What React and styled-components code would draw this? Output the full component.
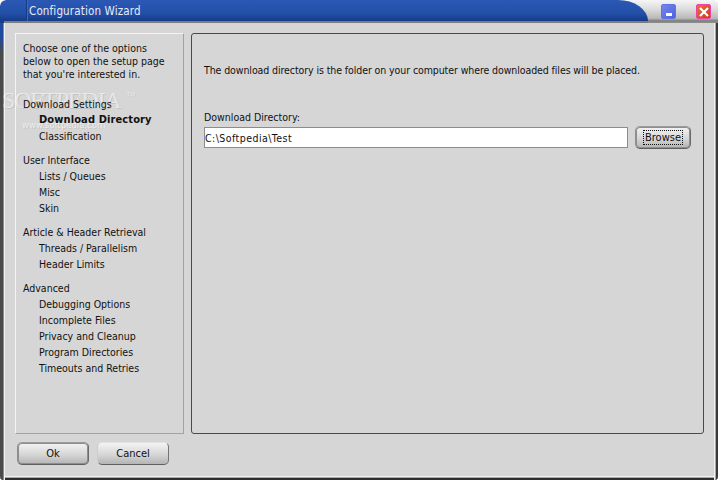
import React from "react";
import styled, { createGlobalStyle } from "styled-components";

const GlobalStyle = createGlobalStyle`
  html, body {
    margin: 0;
    padding: 0;
    background: #fff;
  }
  body {
    font-family: "DejaVu Sans", "Liberation Sans", sans-serif;
    font-stretch: condensed;
    font-size: 10.5px;
    color: #111;
  }
`;

const Window = styled.div`
  position: relative;
  width: 718px;
  height: 480px;
  display: flex;
  flex-direction: column;
  background: #d6d6d6;
  border-radius: 6px 6px 4px 4px;
  overflow: hidden;
`;

const TitleBar = styled.div`
  flex: none;
  height: 23px;
  display: flex;
  background: linear-gradient(#f6f6f6, #dcdcdc 40%, #b8b8b8 80%, #808080 90%, #8e8e8e);
`;

const TitleTab = styled.div`
  width: 648px;
  display: flex;
  align-items: center;
  box-sizing: border-box;
  padding: 0 0 2px 3px;
  background:
    linear-gradient(#7c7c7c, #7c7c7c) 4px bottom / 100% 2px no-repeat,
    linear-gradient(#2a58b4, #224fa6 60%, #163c8a 90%);
  border-radius: 6px 30px 0 0 / 6px 21px 0 0;
`;

const TitleDivider = styled.div`
  width: 1px;
  height: 21px;
  margin: 0 2px 0 23px;
  background: #173c86;
  box-shadow: 1px 0 #3a68c4;
`;

const TitleText = styled.span`
  color: #e6ecfa;
  font-size: 11.5px;
  letter-spacing: 0.15px;
`;

const TitleButtons = styled.div`
  flex: 1;
  display: flex;
  justify-content: flex-end;
  gap: 20px;
  padding: 4px 7px 0 0;
`;

const TitleButton = styled.div`
  width: 15px;
  height: 15px;
  box-sizing: border-box;
  display: flex;
  align-items: ${props => (props.close ? "center" : "flex-end")};
  justify-content: center;
  padding-bottom: ${props => (props.close ? 0 : 2)}px;
  border: 1px solid ${props => (props.close ? "#f040a0" : "#6272e4")};
  border-radius: 2px;
  background: ${props =>
    props.close
      ? "linear-gradient(135deg, #e87048, #c83c18)"
      : "linear-gradient(135deg, #7488ee, #4c62da)"};
`;

const Frame = styled.div`
  flex: 1;
  min-height: 0;
  display: flex;
  flex-direction: column;
  box-sizing: border-box;
  padding: 10px 14px 15px 15px;
  background:
    linear-gradient(#1f4aa0, #1f4aa0 14px, #4a4a4a 30px) left top / 3px 100% no-repeat,
    linear-gradient(#8a8a8a, #8a8a8a) 3px top / 1px 100% no-repeat,
    linear-gradient(#f2f2f2, #f2f2f2) 4px top / 1px 100% no-repeat,
    linear-gradient(#3a3a3a, #3a3a3a) right top / 2px 100% no-repeat,
    linear-gradient(#a8a8a8, #a8a8a8) right 2px top / 1px 100% no-repeat,
    linear-gradient(#f2f2f2, #f2f2f2) right 3px top / 1px 100% no-repeat,
    linear-gradient(#2e2e2e, #2e2e2e) left bottom / 100% 2px no-repeat,
    linear-gradient(#a8a8a8, #a8a8a8) left bottom 2px / 100% 1px no-repeat,
    linear-gradient(#f2f2f2, #f2f2f2) left bottom 3px / 100% 1px no-repeat,
    #d6d6d6;
`;

const Body = styled.div`
  flex: 1;
  min-height: 0;
  display: flex;
  gap: 7px;
`;

const Sidebar = styled.div`
  position: relative;
  z-index: 1;
  width: 169px;
  box-sizing: border-box;
  padding: 8px 7px;
  border: 1px solid;
  border-color: #f4f4f4 #a2a2a2 #a2a2a2 #f4f4f4;
  display: flex;
  flex-direction: column;
`;

const Intro = styled.p`
  margin: 0 0 15px;
  line-height: 13px;
`;

const Group = styled.div`
  margin-bottom: 8px;
  line-height: 16px;
`;

const GroupTitle = styled.div``;

const NavItem = styled.div`
  padding-left: 16px;
  font-weight: ${props => (props.active ? 700 : 400)};
  font-size: ${props => (props.active ? "11px" : "inherit")};
  letter-spacing: ${props => (props.active ? "0.12px" : "normal")};
`;

const Panel = styled.div`
  flex: 1;
  box-sizing: border-box;
  border: 1px solid #4a4a4a;
  border-radius: 3px;
  padding: 29px 12px 0;
`;

const Description = styled.p`
  margin: 0 0 33px;
  line-height: 14px;
  letter-spacing: -0.09px;
`;

const FieldLabel = styled.label`
  display: block;
  line-height: 14px;
  margin-bottom: 2px;
`;

const FieldRow = styled.div`
  display: flex;
  align-items: center;
  gap: 7px;
`;

const TextInput = styled.div`
  flex: 1;
  height: 21px;
  box-sizing: border-box;
  display: flex;
  align-items: center;
  padding-left: 0;
  letter-spacing: 0.45px;
  background: #fff;
  border: 1px solid #8c8c8c;
`;

const Button = styled.button`
  width: ${props => props.width}px;
  height: 23px;
  padding: 0;
  font-family: inherit;
  font-stretch: inherit;
  font-size: 11px;
  color: #111;
  background: linear-gradient(#f4f4f4, #d6d6d6 55%, #b4b4b4);
  border: 1px solid;
  border-color: ${props =>
    props.focused ? "#9a9a9a #6a6a6a #5e5e5e #8e8e8e" : "#e2e2e2 #747474 #5e5e5e #cccccc"};
  border-radius: 5px;
  ${props => props.focused && "box-shadow: inset 0 0 0 1px #8e8e8e;"}
`;

const FocusText = styled.span`
  padding: 0 1px;
  outline: 1px dotted #111;
`;

const Footer = styled.div`
  flex: none;
  display: flex;
  gap: 8px;
  margin-top: 8px;
  padding-left: 2px;
`;

const Watermark = styled.div`
  position: absolute;
  left: 2px;
  top: 87px;
  font-family: "Liberation Serif", serif;
  font-stretch: normal;
  font-size: 24px;
  letter-spacing: -1.2px;
  color: rgba(255, 255, 255, 0.55);
  text-shadow: 1px 1px rgba(0, 0, 0, 0.1);
  pointer-events: none;
`;

const TradeMark = styled.span`
  margin-left: 6px;
  font-family: "Liberation Sans", sans-serif;
  font-size: 6px;
  letter-spacing: 0;
  vertical-align: 12px;
`;

const WatermarkUrl = styled.div`
  position: absolute;
  left: 22px;
  top: 119px;
  font-size: 9.5px;
  color: rgba(255, 255, 255, 0.6);
  text-shadow: 1px 1px rgba(0, 0, 0, 0.1);
  pointer-events: none;
`;

const App = () => (
  <Window>
    <GlobalStyle />
    <TitleBar>
      <TitleTab>
        <TitleDivider />
        <TitleText>Configuration Wizard</TitleText>
      </TitleTab>
      <TitleButtons>
        <TitleButton>
          <svg width="6" height="3"><rect width="6" height="3" fill="#fff" /></svg>
        </TitleButton>
        <TitleButton close>
          <svg width="10" height="10" viewBox="0 0 10 10">
            <path d="M1 1l8 8M9 1l-8 8" stroke="#fff" strokeWidth="2.2" />
          </svg>
        </TitleButton>
      </TitleButtons>
    </TitleBar>
    <Frame>
      <Body>
        <Sidebar>
          <Intro>
            Choose one of the options
            <br />
            below to open the setup page
            <br />
            that you're interested in.
          </Intro>
          <Group>
            <GroupTitle>Download Settings</GroupTitle>
            <NavItem active>Download Directory</NavItem>
            <NavItem>Classification</NavItem>
          </Group>
          <Group>
            <GroupTitle>User Interface</GroupTitle>
            <NavItem>Lists / Queues</NavItem>
            <NavItem>Misc</NavItem>
            <NavItem>Skin</NavItem>
          </Group>
          <Group>
            <GroupTitle>Article &amp; Header Retrieval</GroupTitle>
            <NavItem>Threads / Parallelism</NavItem>
            <NavItem>Header Limits</NavItem>
          </Group>
          <Group>
            <GroupTitle>Advanced</GroupTitle>
            <NavItem>Debugging Options</NavItem>
            <NavItem>Incomplete Files</NavItem>
            <NavItem>Privacy and Cleanup</NavItem>
            <NavItem>Program Directories</NavItem>
            <NavItem>Timeouts and Retries</NavItem>
          </Group>
        </Sidebar>
        <Panel>
          <Description>
            The download directory is the folder on your computer where downloaded files will be placed.
          </Description>
          <FieldLabel>Download Directory:</FieldLabel>
          <FieldRow>
            <TextInput>C:\Softpedia\Test</TextInput>
            <Button width={56} focused>
              <FocusText>Browse</FocusText>
            </Button>
          </FieldRow>
        </Panel>
      </Body>
      <Footer>
        <Button width={72} focused>Ok</Button>
        <Button width={72}>Cancel</Button>
      </Footer>
    </Frame>
    <Watermark>SOFTPEDIA<TradeMark>TM</TradeMark></Watermark>
    <WatermarkUrl>www.softpedia.com</WatermarkUrl>
  </Window>
);

export default App;
